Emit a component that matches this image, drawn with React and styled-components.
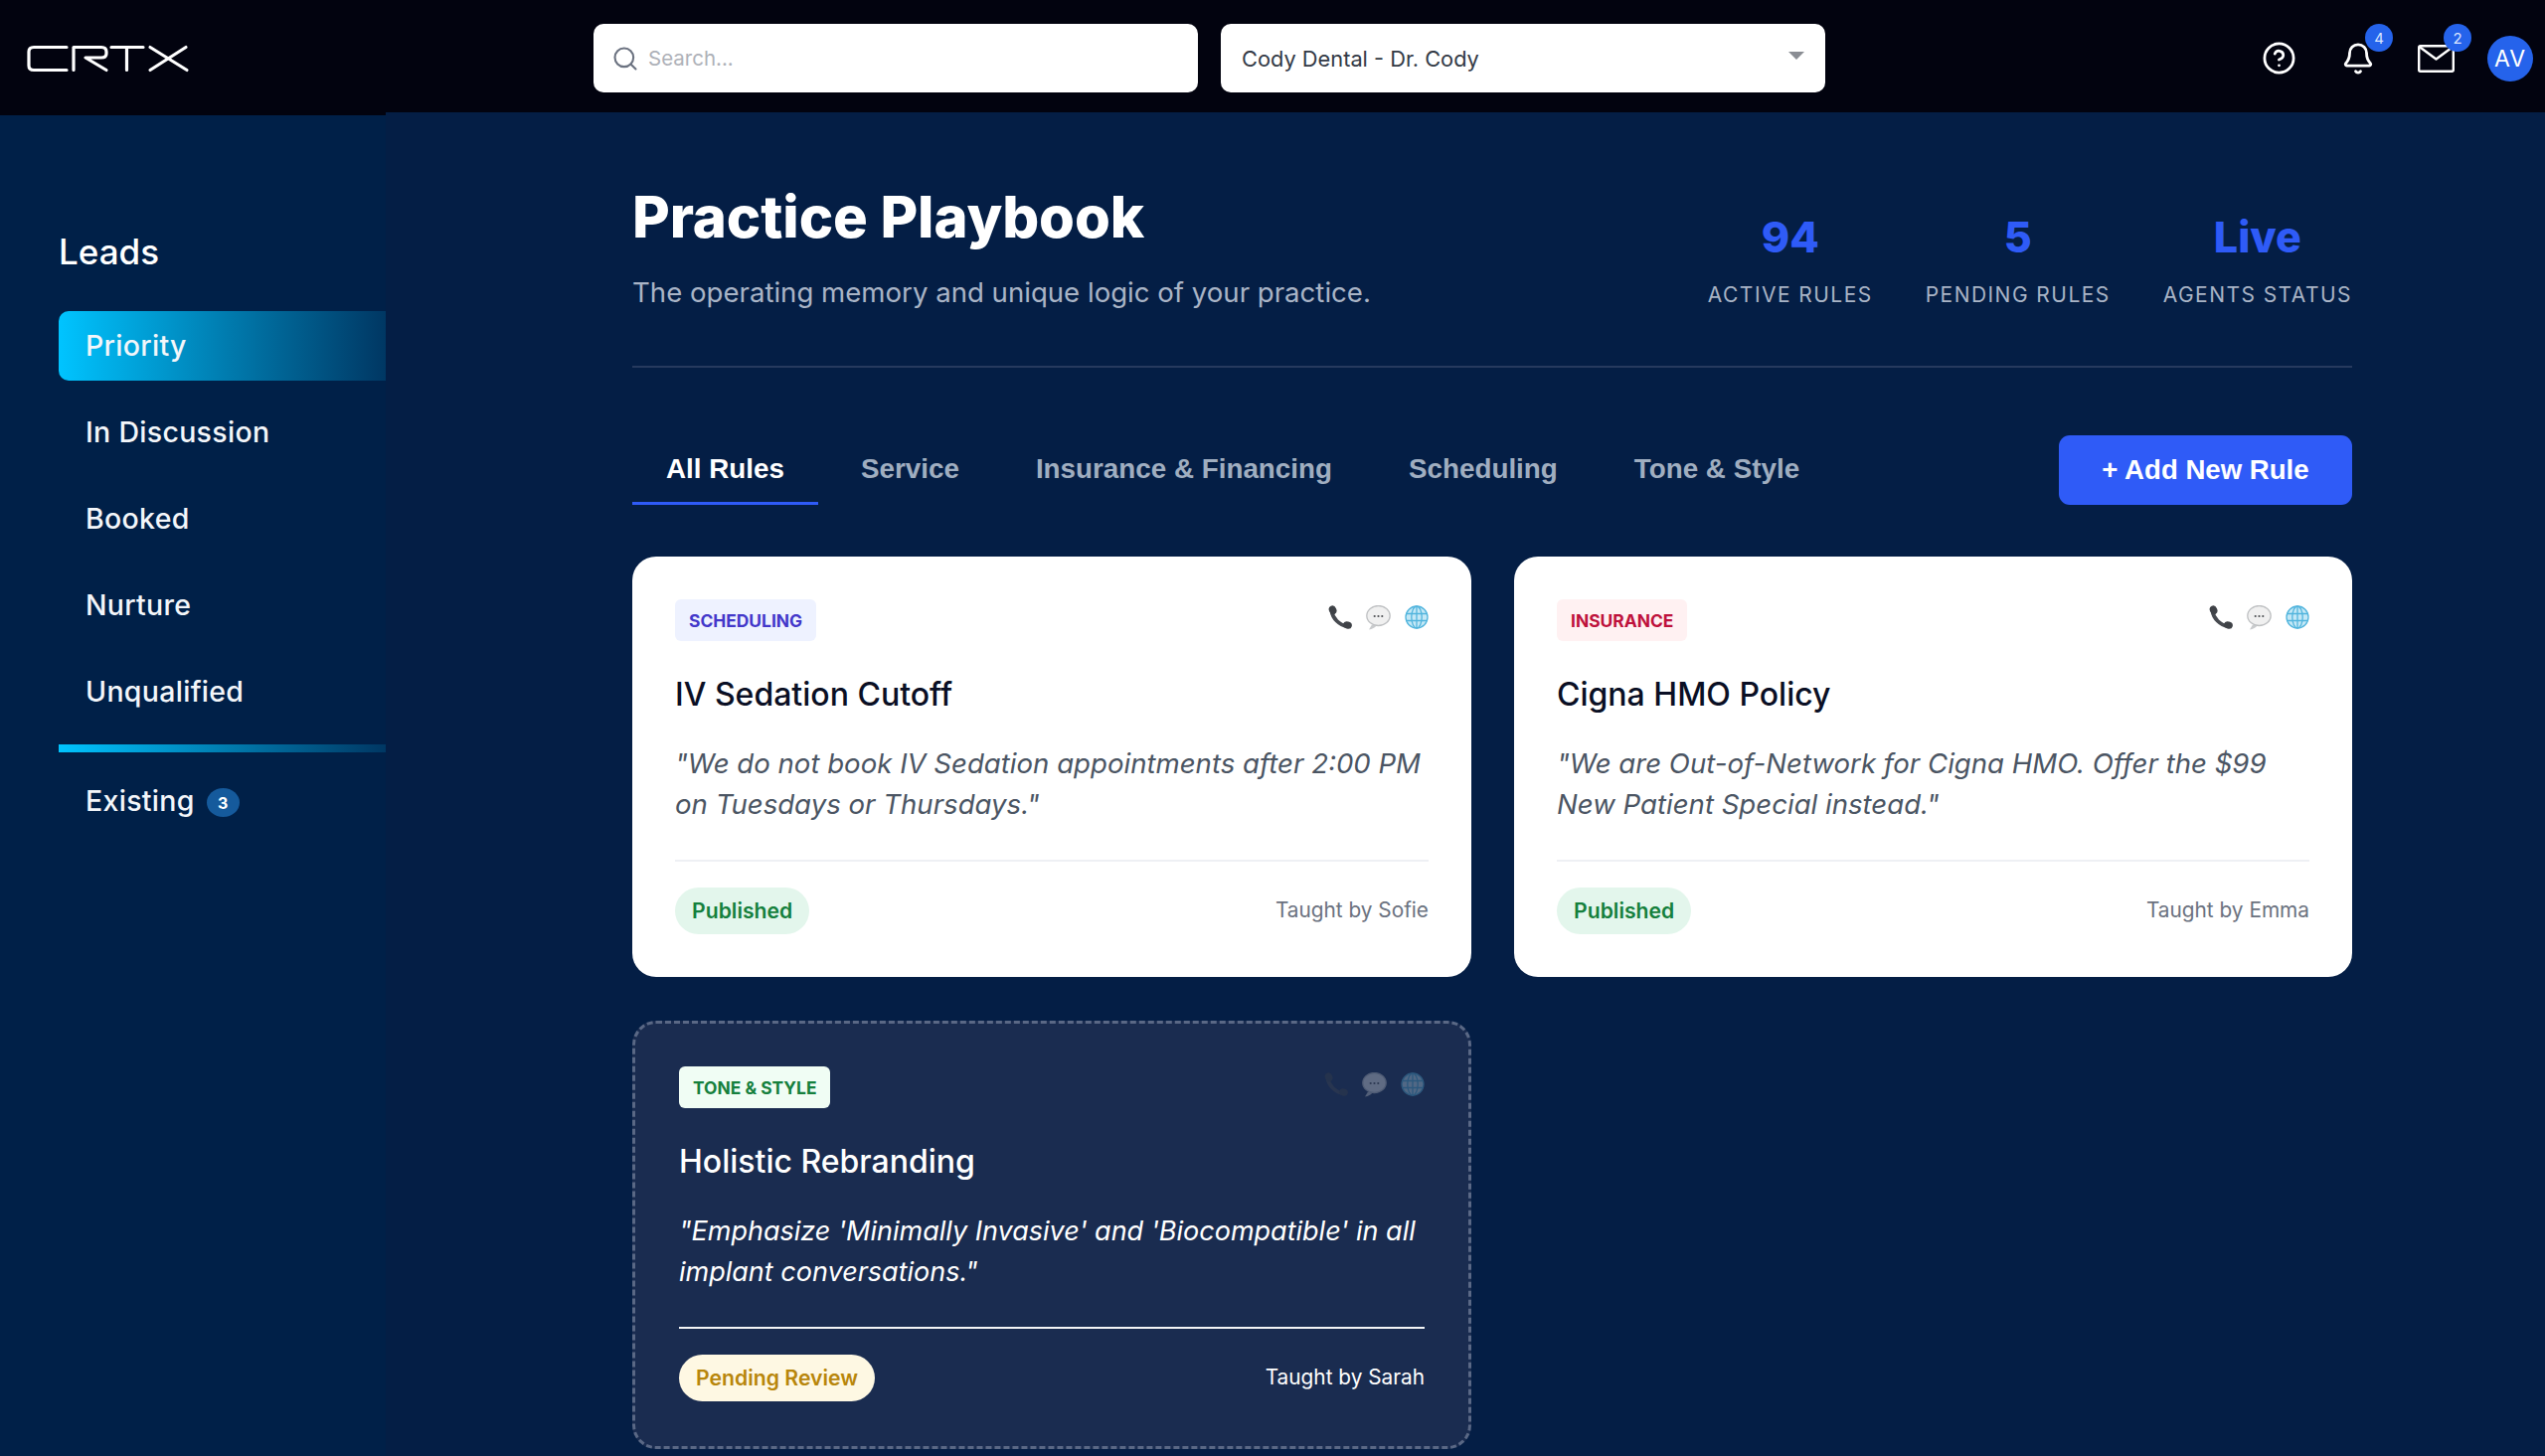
import React from 'react';
import styled, { createGlobalStyle } from 'styled-components';
import { Search, CircleHelp, Bell } from 'lucide-react';

const GlobalStyle = createGlobalStyle`
  html, body {
    margin: 0;
    padding: 0;
    background: #041e45;
    font-family: "Inter", "Liberation Sans", sans-serif;
  }
  * { box-sizing: border-box; }
`;

const Page = styled.div`
  width: 2560px;
  height: 1465px;
  overflow: hidden;
  display: flex;
  flex-direction: column;
`;

const TopBar = styled.header`
  height: 113px;
  flex: none;
  display: flex;
  align-items: flex-start;
  padding: 24px 12px 0 0;
  background: #02030f;
`;

const LogoWrap = styled.div`
  width: 597px;
  height: 69px;
  flex: none;
  display: flex;
  align-items: center;
  padding-left: 27px;
`;

const SearchBox = styled.div`
  width: 608px;
  height: 69px;
  display: flex;
  align-items: center;
  gap: 9px;
  padding: 0 18px;
  background: #fff;
  border-radius: 10px;
  color: #aeb1b8;
  font-size: 20.5px;
`;

const SelectBox = styled(SearchBox)`
  margin-left: 23px;
  justify-content: space-between;
  padding: 0 21px;
  color: #333a46;
  font-size: 21.8px;
`;

const Caret = styled.span`
  width: 0;
  height: 0;
  margin-top: -6px;
  border-left: 8px solid transparent;
  border-right: 8px solid transparent;
  border-top: 8px solid #8a8d93;
`;

const TopIcons = styled.div`
  margin-left: auto;
  display: flex;
  align-items: center;
  height: 69px;
`;

const IconButton = styled.div`
  position: relative;
  width: 79px;
  height: 69px;
  display: flex;
  align-items: center;
  justify-content: center;
  color: #fff;
`;

const CountBadge = styled.span`
  position: absolute;
  top: 0;
  left: 47px;
  width: 28px;
  height: 28px;
  border-radius: 50%;
  background: #2563eb;
  color: #dbe5ff;
  font-size: 15px;
  display: flex;
  align-items: center;
  justify-content: center;
`;

const Avatar = styled.div`
  width: 46px;
  height: 46px;
  margin-left: 12px;
  border-radius: 50%;
  background: #2563eb;
  color: #fff;
  font-size: 23px;
  letter-spacing: 1px;
  display: flex;
  align-items: center;
  justify-content: center;
`;

const Body = styled.div`
  flex: 1;
  display: flex;
  min-height: 0;
`;

const Sidebar = styled.aside`
  width: 388px;
  flex: none;
  padding: 115px 0 0 59px;
  background: #002048;
  border-top: 3px solid #02030f;
`;

const SideTitle = styled.h2`
  margin: 0 0 38px;
  height: 44px;
  line-height: 44px;
  color: #fff;
  font-size: 35px;
  font-weight: 500;
`;

const NavItem = styled.div`
  height: 70px;
  margin-bottom: 17px;
  padding: 0 0 2px 27px;
  display: flex;
  align-items: center;
  gap: 12px;
  color: #f3f6fa;
  font-size: 28.5px;
  font-weight: 500;
  letter-spacing: 0.3px;
  border-radius: 10px 0 0 10px;
  background: ${p => p.$active ? 'linear-gradient(90deg, #00c4ff 0%, #003763 100%)' : 'none'};
`;

const NavDivider = styled.div`
  height: 8px;
  margin: 18px 0 14px;
  background: linear-gradient(90deg, #00c4ff 0%, #003763 100%);
`;

const NavCount = styled.span`
  width: 33px;
  height: 29px;
  margin-top: 5px;
  border-radius: 50%;
  background: #155a9c;
  color: #fff;
  font-size: 16px;
  font-weight: 700;
  letter-spacing: 0;
  display: flex;
  align-items: center;
  justify-content: center;
`;

const Main = styled.main`
  flex: 1;
  padding: 0 194px 0 248px;
  background: #041e45;
`;

const Header = styled.div`
  height: 257px;
  padding-top: 70px;
  display: flex;
  justify-content: space-between;
  align-items: flex-start;
  border-bottom: 2px solid #263a5e;
`;

const PageTitle = styled.h1`
  margin: 0;
  height: 70px;
  line-height: 70px;
  color: #fff;
  font-size: 58px;
  font-weight: 800;
  letter-spacing: -0.1px;
`;

const Subtitle = styled.p`
  margin: 24px 0 0;
  line-height: 34px;
  color: #a9b4c6;
  font-size: 27.6px;
`;

const Stats = styled.div`
  display: flex;
  gap: 53px;
  padding-top: 30px;
`;

const Stat = styled.div`
  display: flex;
  flex-direction: column;
  align-items: center;
`;

const StatValue = styled.div`
  height: 50px;
  line-height: 50px;
  color: #2f5bf7;
  font-size: 43px;
  font-weight: 800;
`;

const StatLabel = styled.div`
  margin-top: 20px;
  line-height: 28px;
  color: #a9b4c6;
  font-size: 21px;
  letter-spacing: 1.45px;
`;

const TabRow = styled.div`
  height: 70px;
  margin: 68px 0 52px;
  display: flex;
  justify-content: space-between;
  align-items: flex-start;
`;

const Tabs = styled.div`
  display: flex;
  gap: 9px;
`;

const Tab = styled.div`
  height: 70px;
  padding: 0 34px;
  line-height: 68px;
  font-family: "Liberation Sans", sans-serif;
  font-size: 27.8px;
  font-weight: 700;
  color: ${p => p.$active ? '#fff' : '#a0aec0'};
  border-bottom: 3px solid ${p => p.$active ? '#2f5bf7' : 'transparent'};
`;

const AddButton = styled.button`
  width: 295px;
  height: 70px;
  border: 0;
  border-radius: 11px;
  background: #2f5bf7;
  color: #fff;
  font-family: "Liberation Sans", sans-serif;
  font-size: 27.6px;
  font-weight: 700;
`;

const CardGrid = styled.div`
  display: grid;
  grid-template-columns: 844px 843px;
  gap: 44px 43px;
  align-items: start;
`;

const Card = styled.article`
  padding: ${p => p.$pending ? '43px 44px 45px' : '43px'};
  border-radius: 24px;
  background: ${p => p.$pending ? '#1a2c50' : '#fff'};
  border: ${p => p.$pending ? '3px dashed #5a6885' : '0'};
`;

const CardTop = styled.div`
  display: flex;
  justify-content: space-between;
  align-items: flex-start;
`;

const Tag = styled.span`
  height: 42px;
  padding: 0 14px;
  display: inline-flex;
  align-items: center;
  border-radius: 6px;
  background: ${p => p.$bg};
  color: ${p => p.$color};
  font-size: 17.4px;
  font-weight: 700;
`;

const ChannelIcons = styled.div`
  display: flex;
  gap: 14px;
  margin-top: 6px;
  opacity: ${p => p.$pending ? 0.32 : 1};
`;

const CardTitle = styled.h3`
  margin: 32px 0 0;
  line-height: 44px;
  color: ${p => p.$pending ? '#fff' : '#0a0f24'};
  font-size: 32px;
  font-weight: 500;
`;

const Quote = styled.p`
  margin: 27px 0 0;
  line-height: 41px;
  color: ${p => p.$pending ? '#fff' : '#4b5563'};
  font-size: ${p => p.$pending ? '27px' : '27.6px'};
  font-style: italic;
`;

const CardFoot = styled.div`
  margin-top: 35px;
  padding-top: 26px;
  display: flex;
  justify-content: space-between;
  align-items: center;
  border-top: 2px solid ${p => p.$pending ? '#f3f4f6' : '#eef0f4'};
`;

const StatusPill = styled.span`
  height: 47px;
  padding: 0 17px 2px;
  display: inline-flex;
  align-items: center;
  border-radius: 24px;
  background: ${p => p.$bg};
  color: ${p => p.$color};
  font-size: 21.2px;
  font-weight: 600;
`;

const Author = styled.span`
  color: ${p => p.$pending ? '#fff' : '#6b7280'};
  font-size: 20.8px;
  padding-bottom: 3px;
`;

const Logo = () => (
  <svg width="165" height="30" viewBox="0 0 165 30" fill="none" stroke="#fff" strokeWidth="3.2" strokeLinecap="round" strokeLinejoin="round">
    <path d="M40 3.5H7Q2 3.5 2 8V22Q2 26.5 7 26.5H40" />
    <path d="M47 26.5V3.5H75Q80 3.5 80 8V10Q80 14 75 14H59L80 26.5" />
    <path d="M85 3.5H117M100.5 3.5V26.5" />
    <path d="M124 3.5L161 26.5M160 3.5L124 26.5" />
  </svg>
);

const MailIcon = () => (
  <svg width="37" height="28" viewBox="0 0 37 28" fill="none" stroke="#fff" strokeWidth="2.4" strokeLinejoin="round">
    <rect x="1.2" y="1.2" width="34.6" height="25.6" rx="1.5" />
    <path d="M1.6 2L18.5 14.5L35.4 2" />
  </svg>
);

const PhoneIcon = () => (
  <svg width="24" height="25" viewBox="0 0 24 25" fill="none">
    <path d="M3.5 6C4.5 13 11 20 19 21" stroke="#474a50" strokeWidth="3.8" strokeLinecap="round" />
    <ellipse cx="4.6" cy="4.8" rx="3.7" ry="4.5" transform="rotate(-25 4.6 4.8)" fill="#3f4247" />
    <ellipse cx="19.4" cy="20" rx="4.5" ry="3.5" transform="rotate(15 19.4 20)" fill="#3f4247" />
  </svg>
);

const BubbleIcon = () => (
  <svg width="25" height="25" viewBox="0 0 25 25">
    <path d="M6 19.5L3 24.5C6.5 24 9 22.6 10.5 20.5Z" fill="#c9cbcd" />
    <ellipse cx="12.5" cy="10.5" rx="11.7" ry="10" fill="#f0f0f0" stroke="#bfc1c3" strokeWidth="1.3" />
    <circle cx="8.7" cy="11" r="1.1" fill="#505256" />
    <circle cx="12.5" cy="11" r="1.1" fill="#505256" />
    <circle cx="16.3" cy="11" r="1.1" fill="#505256" />
  </svg>
);

const GlobeIcon = () => (
  <svg width="24" height="24" viewBox="0 0 24 24" fill="#c4e8f6" stroke="#52b5dd" strokeWidth="1.3">
    <circle cx="12" cy="12" r="11" />
    <ellipse cx="12" cy="12" rx="5.2" ry="11" fill="none" />
    <path d="M12 1V23M1.5 8.5H22.5M1.5 15.5H22.5" fill="none" />
  </svg>
);

const NAV = ['In Discussion', 'Booked', 'Nurture', 'Unqualified'];
const STATS = [
  { value: '94', label: 'ACTIVE RULES' },
  { value: '5', label: 'PENDING RULES' },
  { value: 'Live', label: 'AGENTS STATUS' },
];
const TABS = ['All Rules', 'Service', 'Insurance & Financing', 'Scheduling', 'Tone & Style'];
const RULES = [
  {
    tag: 'SCHEDULING', tagBg: '#eef2ff', tagColor: '#4338ca',
    title: 'IV Sedation Cutoff',
    quote: '"We do not book IV Sedation appointments after 2:00 PM on Tuesdays or Thursdays."',
    status: 'Published', statusBg: '#e3f6ec', statusColor: '#15803d',
    author: 'Taught by Sofie',
  },
  {
    tag: 'INSURANCE', tagBg: '#fff1f2', tagColor: '#be123c',
    title: 'Cigna HMO Policy',
    quote: '"We are Out-of-Network for Cigna HMO. Offer the $99 New Patient Special instead."',
    status: 'Published', statusBg: '#e3f6ec', statusColor: '#15803d',
    author: 'Taught by Emma',
  },
  {
    tag: 'TONE & STYLE', tagBg: '#f0fdf4', tagColor: '#15803d',
    title: 'Holistic Rebranding',
    quote: '"Emphasize \'Minimally Invasive\' and \'Biocompatible\' in all implant conversations."',
    status: 'Pending Review', statusBg: '#fef8e3', statusColor: '#b8860b',
    author: 'Taught by Sarah',
    pending: true,
  },
];

const App = () => (
  <Page>
    <GlobalStyle />
    <TopBar>
      <LogoWrap><Logo /></LogoWrap>
      <SearchBox>
        <Search size={28} color="#6b7280" strokeWidth={1.8} />
        Search...
      </SearchBox>
      <SelectBox>
        Cody Dental - Dr. Cody
        <Caret />
      </SelectBox>
      <TopIcons>
        <IconButton><CircleHelp size={35} strokeWidth={1.9} /></IconButton>
        <IconButton>
          <Bell size={34} strokeWidth={2} />
          <CountBadge>4</CountBadge>
        </IconButton>
        <IconButton>
          <MailIcon />
          <CountBadge>2</CountBadge>
        </IconButton>
        <Avatar>AV</Avatar>
      </TopIcons>
    </TopBar>
    <Body>
      <Sidebar>
        <SideTitle>Leads</SideTitle>
        <NavItem $active>Priority</NavItem>
        {NAV.map(name => <NavItem key={name}>{name}</NavItem>)}
        <NavDivider />
        <NavItem>Existing<NavCount>3</NavCount></NavItem>
      </Sidebar>
      <Main>
        <Header>
          <div>
            <PageTitle>Practice Playbook</PageTitle>
            <Subtitle>The operating memory and unique logic of your practice.</Subtitle>
          </div>
          <Stats>
            {STATS.map(s => (
              <Stat key={s.label}>
                <StatValue>{s.value}</StatValue>
                <StatLabel>{s.label}</StatLabel>
              </Stat>
            ))}
          </Stats>
        </Header>
        <TabRow>
          <Tabs>
            {TABS.map((t, i) => <Tab key={t} $active={i === 0}>{t}</Tab>)}
          </Tabs>
          <AddButton>+ Add New Rule</AddButton>
        </TabRow>
        <CardGrid>
          {RULES.map(r => (
            <Card key={r.title} $pending={r.pending}>
              <CardTop>
                <Tag $bg={r.tagBg} $color={r.tagColor}>{r.tag}</Tag>
                <ChannelIcons $pending={r.pending}>
                  <PhoneIcon />
                  <BubbleIcon />
                  <GlobeIcon />
                </ChannelIcons>
              </CardTop>
              <CardTitle $pending={r.pending}>{r.title}</CardTitle>
              <Quote $pending={r.pending}>{r.quote}</Quote>
              <CardFoot $pending={r.pending}>
                <StatusPill $bg={r.statusBg} $color={r.statusColor}>{r.status}</StatusPill>
                <Author $pending={r.pending}>{r.author}</Author>
              </CardFoot>
            </Card>
          ))}
        </CardGrid>
      </Main>
    </Body>
  </Page>
);

export default App;
